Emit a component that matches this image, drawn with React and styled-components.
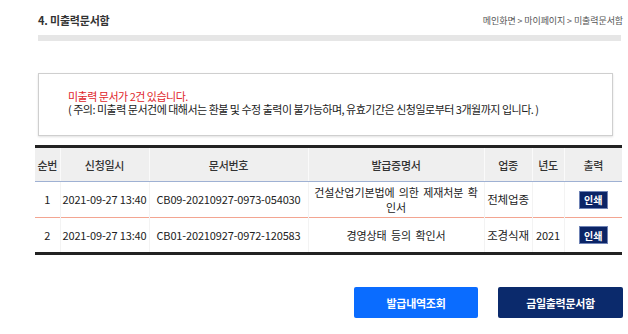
import React from "react";
import styled, { createGlobalStyle } from "styled-components";

const GlobalStyle = createGlobalStyle`
  html, body {
    margin: 0;
    padding: 0;
    background: #fff;
  }
  body {
    font-family: "Noto Sans CJK KR", "Noto Sans", sans-serif;
    color: #333;
  }
`;

const Page = styled.div`
  width: 628px;
  padding-top: 12px;
  box-sizing: border-box;
`;

const TitleRow = styled.div`
  display: flex;
  justify-content: space-between;
  align-items: center;
  margin: 0 5px 0 38px;
  height: 16px;
`;

const Title = styled.h2`
  margin: 0;
  font-size: 11px;
  font-weight: 700;
  color: #333;
  letter-spacing: -0.2px;
`;

const Breadcrumb = styled.div`
  font-size: 9px;
  color: #555;
  letter-spacing: -0.1px;
`;

const Bar = styled.div`
  height: 6px;
  margin: 7px 7px 0 38px;
  background: #e6e6e6;
`;

const Notice = styled.div`
  margin: 32px 15px 0 38px;
  height: 63px;
  box-sizing: border-box;
  border: 1px solid #cfcfcf;
  box-shadow: 0 1px 2px rgba(0, 0, 0, 0.12);
  padding: 16px 29px 0;
  font-size: 11px;
  line-height: 13px;
  letter-spacing: -0.5px;
`;

const NoticeLine = styled.p`
  margin: 0;
  color: ${(p) => (p.$alert ? "#e0262b" : "#222")};
`;

const Table = styled.table`
  margin: 9px 6px 0 35px;
  width: 587px;
  border-collapse: collapse;
  table-layout: fixed;
  border-top: 3px solid #222;
  border-bottom: 3px solid #222;
  font-size: 11px;
`;

const Th = styled.th`
  height: 33px;
  background: #efefef;
  font-weight: 500;
  color: #333;
  border-right: 1px solid #fafafa;
  border-bottom: 1px solid #9fb1d3;
  padding: 0;
  letter-spacing: -0.3px;
  &:last-child {
    border-right: none;
  }
`;

const Tr = styled.tr`
  & + & td {
    border-top: 1px solid #f3a591;
  }
`;

const Td = styled.td`
  height: ${(p) => p.$h || 35}px;
  padding: 0;
  text-align: center;
  color: #222;
  line-height: 15px;
  white-space: nowrap;
  border-right: 1px solid #f3f3f3;
  font-size: ${(p) => (p.$kr ? "11.5px" : "11px")};
  letter-spacing: -0.15px;
  &:last-child {
    border-right: none;
  }
`;

const CertCell = styled(Td)`
  font-size: 11px;
  letter-spacing: -0.1px;
  word-spacing: 2px;
`;

const PrintButton = styled.button`
  width: 29px;
  height: 18px;
  padding: 0;
  border: 1px solid #6f83b5;
  background: #0b2466;
  color: #fff;
  font-family: inherit;
  font-size: 10px;
  font-weight: 700;
  cursor: pointer;
`;

const Actions = styled.div`
  display: flex;
  justify-content: flex-end;
  gap: 20px;
  margin: 32px 5px 0 0;
`;

const ActionButton = styled.button`
  width: ${(p) => p.$w}px;
  height: 31px;
  border: none;
  border-radius: 2px;
  background: ${(p) => (p.$dark ? "#0b2a6c" : "#0a6cff")};
  color: #fff;
  font-family: inherit;
  font-size: 11px;
  font-weight: 700;
  letter-spacing: -0.3px;
  cursor: pointer;
`;

const columns = [
  { label: "순번", width: 25 },
  { label: "신청일시", width: 89 },
  { label: "문서번호", width: 159 },
  { label: "발급증명서", width: 176 },
  { label: "업종", width: 48 },
  { label: "년도", width: 32 },
  { label: "출력", width: 58 },
];

const rows = [
  {
    no: 1,
    date: "2021-09-27 13:40",
    doc: "CB09-20210927-0973-054030",
    cert: ["건설산업기본법에 의한 제재처분 확", "인서"],
    kind: "전체업종",
    year: "",
    h: 35,
  },
  {
    no: 2,
    date: "2021-09-27 13:40",
    doc: "CB01-20210927-0972-120583",
    cert: ["경영상태 등의 확인서"],
    kind: "조경식재",
    year: "2021",
    h: 34,
  },
];

export default function App() {
  return (
    <Page>
      <GlobalStyle />
      <TitleRow>
        <Title>4. 미출력문서함</Title>
        <Breadcrumb>메인화면 &gt; 마이페이지 &gt; 미출력문서함</Breadcrumb>
      </TitleRow>
      <Bar />
      <Notice>
        <NoticeLine $alert>미출력 문서가 2건 있습니다.</NoticeLine>
        <NoticeLine>
          ( 주의: 미출력 문서건에 대해서는 환불 및 수정 출력이 불가능하며, 유효기간은 신청일로부터 3개월까지 입니다. )
        </NoticeLine>
      </Notice>
      <Table>
        <colgroup>
          {columns.map((c) => (
            <col key={c.label} style={{ width: c.width }} />
          ))}
        </colgroup>
        <thead>
          <tr>
            {columns.map((c) => (
              <Th key={c.label}>{c.label}</Th>
            ))}
          </tr>
        </thead>
        <tbody>
          {rows.map((r) => (
            <Tr key={r.no}>
              <Td $h={r.h}>{r.no}</Td>
              <Td $h={r.h}>{r.date}</Td>
              <Td $h={r.h}>{r.doc}</Td>
              <CertCell $h={r.h}>
                {r.cert.map((line, i) => (
                  <React.Fragment key={i}>
                    {i > 0 && <br />}
                    {line}
                  </React.Fragment>
                ))}
              </CertCell>
              <Td $h={r.h} $kr>{r.kind}</Td>
              <Td $h={r.h}>{r.year}</Td>
              <Td $h={r.h}>
                <PrintButton>인쇄</PrintButton>
              </Td>
            </Tr>
          ))}
        </tbody>
      </Table>
      <Actions>
        <ActionButton $w={124}>발급내역조회</ActionButton>
        <ActionButton $w={125} $dark>금일출력문서함</ActionButton>
      </Actions>
    </Page>
  );
}
